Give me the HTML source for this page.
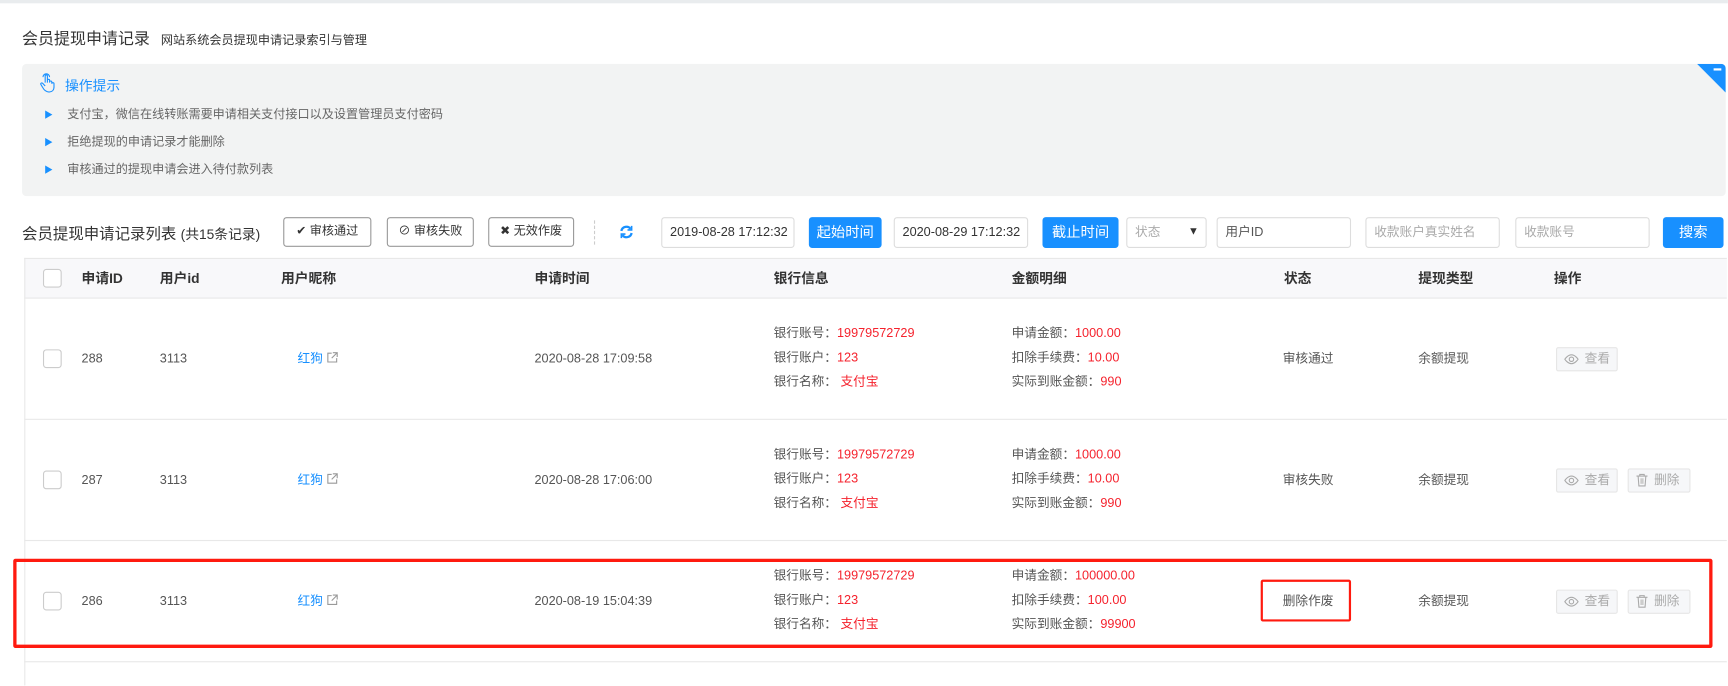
<!DOCTYPE html>
<html><head><meta charset="utf-8"><style>
*{margin:0;padding:0;box-sizing:border-box}
html,body{width:1728px;height:686px;overflow:hidden;background:#fff}
body{font-family:"Liberation Sans","Noto Sans CJK SC",sans-serif;font-size:12px;color:#555;position:relative}
#w{position:absolute;left:0;top:0;width:1568px;height:622px;overflow:hidden;transform:scale(1.102);transform-origin:0 0}
.a{position:absolute;white-space:nowrap}
.btn{position:absolute;top:197px;height:27px;border:1px solid #999;border-radius:3px;background:#fff;color:#333;font-size:11px;line-height:25px;text-align:center;white-space:nowrap}
.inp{position:absolute;top:197px;height:28px;border:1px solid #ddd;border-radius:3px;background:#fff;color:#333;font-size:11.5px;line-height:26px;padding-left:7px;white-space:nowrap;overflow:hidden}
.ph{color:#aaa}
.bb{position:absolute;top:197px;height:28px;background:#1890ff;border-radius:3px;color:#fff;font-size:13px;line-height:28px;text-align:center;white-space:nowrap}
.th{position:absolute;top:245px;font-weight:bold;color:#333;font-size:12.5px;line-height:16px}
.hl{position:absolute;left:22px;width:1545px;height:1px;background:#e8e8e8}
.cb{position:absolute;left:39px;width:17px;height:17px;border:1px solid #ccc;border-radius:3px;background:#fff}
.r{color:#f5222d}
.ln{line-height:22px;font-size:11.5px}
.t{line-height:16px;font-size:11.5px}
.op{position:absolute;height:22px;border:1px solid #e6e6e6;background:#f6f7f9;border-radius:2px;color:#aaa;font-size:11.5px;line-height:20px;padding-left:6px;white-space:nowrap}
.op svg{vertical-align:-3px;margin-right:5px}
</style></head><body><div id="w">
<div class="a" style="left:0;top:0;width:1568px;height:3px;background:#e9ecee"></div>
<div class="a" style="left:20px;top:24px;font-size:14.5px;color:#333">会员提现申请记录 <span style="font-size:11px;color:#333;margin-left:6px">网站系统会员提现申请记录索引与管理</span></div>
<div class="a" style="left:20px;top:58px;width:1546px;height:120px;background:#f2f3f3;border-radius:4px;overflow:hidden">
 <div class="a" style="right:0;top:0;width:0;height:0;border-top:26px solid #1890ff;border-left:26px solid transparent"></div>
 <div class="a" style="right:4px;top:4px;width:7px;height:2px;background:#fff"></div>
 <svg class="a" style="left:15px;top:8px" width="16" height="18" viewBox="0 0 16 18" fill="none" stroke="#1890ff" stroke-width="1"><path d="M6 9V3a1 1 0 0 1 2 0v6M8 8V7a1 1 0 0 1 2 0v2M10 8.5a1 1 0 0 1 2 0V10M12 10a1 1 0 0 1 2 0v3c0 3-2 4.5-4.5 4.5S5 16 3.5 13L2 10.5a1 1 0 0 1 1.8-.8L6 12"/><path d="M4 4a3 3 0 0 1 6 0" /></svg>
 <div class="a" style="left:39px;top:9px;font-size:12.5px;color:#1890ff">操作提示</div>
 <div class="a" style="left:20px;top:34px;color:#666;line-height:24px;font-size:11px">
  <div><span style="color:#1890ff;font-size:8px;margin-right:13px">▶</span>支付宝，微信在线转账需要申请相关支付接口以及设置管理员支付密码</div>
  <div><span style="color:#1890ff;font-size:8px;margin-right:13px">▶</span>拒绝提现的申请记录才能删除</div>
  <div><span style="color:#1890ff;font-size:8px;margin-right:13px">▶</span>审核通过的提现申请会进入待付款列表</div>
 </div>
</div>
<div class="a" style="left:20px;top:202px;font-size:14px;color:#333">会员提现申请记录列表 <span style="font-size:12.5px">(共15条记录)</span></div>
<div class="btn" style="left:257px;width:80px">✔ 审核通过</div>
<div class="btn" style="left:351px;width:79px">⊘ 审核失败</div>
<div class="btn" style="left:443px;width:78px">✖ 无效作废</div>
<div class="a" style="left:539px;top:200px;height:22px;border-left:1px dashed #ccc"></div>
<svg class="a" style="left:562px;top:204px" width="13" height="13" viewBox="0 0 14 14" fill="none" stroke="#1890ff" stroke-width="2.2"><path d="M2 6a5 5 0 0 1 9-2M12 8a5 5 0 0 1-9 2"/><path d="M12 1v4H8M2 13V9h4" stroke-width="1.6"/></svg>
<div class="inp" style="left:600px;width:121px">2019-08-28 17:12:32</div>
<div class="bb" style="left:734px;width:66px">起始时间</div>
<div class="inp" style="left:811px;width:122px">2020-08-29 17:12:32</div>
<div class="bb" style="left:946px;width:69px">截止时间</div>
<div class="inp ph" style="left:1022px;width:73px">状态<span style="position:absolute;right:6px;color:#333;font-size:10px">▼</span></div>
<div class="inp ph" style="left:1104px;width:122px;color:#555">用户ID</div>
<div class="inp ph" style="left:1239px;width:122px">收款账户真实姓名</div>
<div class="inp ph" style="left:1375px;width:122px">收款账号</div>
<div class="bb" style="left:1509px;width:55px">搜索</div>

<div class="a" style="left:22px;top:234px;width:1545px;height:36px;background:#f8f8fa;border-top:1px solid #e8e8e8"></div>
<div class="a" style="left:22px;top:234px;width:1px;height:388px;background:#e8e8e8"></div>
<div class="hl" style="top:270px"></div><div class="hl" style="top:380px"></div><div class="hl" style="top:490px"></div><div class="hl" style="top:600px"></div>
<div class="cb" style="top:244px"></div>
<div class="th" style="left:74px">申请ID</div><div class="th" style="left:145px">用户id</div><div class="th" style="left:255px">用户昵称</div><div class="th" style="left:485px">申请时间</div><div class="th" style="left:702px">银行信息</div><div class="th" style="left:918px">金额明细</div><div class="th" style="left:1165px">状态</div><div class="th" style="left:1287px">提现类型</div><div class="th" style="left:1410px">操作</div>

<!-- row 1 -->
<div class="cb" style="top:317px"></div>
<div class="a t" style="left:74px;top:318px">288</div><div class="a t" style="left:145px;top:318px">3113</div>
<div class="a t" style="left:270px;top:318px;color:#1890ff">红狗 <svg width="11" height="11" viewBox="0 0 11 11" fill="none" stroke="#999" style="vertical-align:-1px"><path d="M5 1.5H1.5v8h8V6M6 1h4v4M10 1 5 6"/></svg></div>
<div class="a t" style="left:485px;top:318px">2020-08-28 17:09:58</div>
<div class="a ln" style="left:702px;top:292px">银行账号：<span class="r">19979572729</span><br>银行账户：<span class="r">123</span><br>银行名称： <span class="r">支付宝</span></div>
<div class="a ln" style="left:918px;top:292px">申请金额：<span class="r">1000.00</span><br>扣除手续费：<span class="r">10.00</span><br>实际到账金额：<span class="r">990</span></div>
<div class="a t" style="left:1164px;top:318px">审核通过</div><div class="a t" style="left:1287px;top:318px">余额提现</div>
<div class="op" style="left:1412px;top:315px;width:56px"><svg width="14" height="12" viewBox="0 0 14 12" fill="none" stroke="#aaa"><path d="M1 6s2.5-4 6-4 6 4 6 4-2.5 4-6 4-6-4-6-4z"/><circle cx="7" cy="6" r="2"/></svg>查看</div>

<!-- row 2 -->
<div class="cb" style="top:427px"></div>
<div class="a t" style="left:74px;top:428px">287</div><div class="a t" style="left:145px;top:428px">3113</div>
<div class="a t" style="left:270px;top:428px;color:#1890ff">红狗 <svg width="11" height="11" viewBox="0 0 11 11" fill="none" stroke="#999" style="vertical-align:-1px"><path d="M5 1.5H1.5v8h8V6M6 1h4v4M10 1 5 6"/></svg></div>
<div class="a t" style="left:485px;top:428px">2020-08-28 17:06:00</div>
<div class="a ln" style="left:702px;top:402px">银行账号：<span class="r">19979572729</span><br>银行账户：<span class="r">123</span><br>银行名称： <span class="r">支付宝</span></div>
<div class="a ln" style="left:918px;top:402px">申请金额：<span class="r">1000.00</span><br>扣除手续费：<span class="r">10.00</span><br>实际到账金额：<span class="r">990</span></div>
<div class="a t" style="left:1164px;top:428px">审核失败</div><div class="a t" style="left:1287px;top:428px">余额提现</div>
<div class="op" style="left:1412px;top:425px;width:56px"><svg width="14" height="12" viewBox="0 0 14 12" fill="none" stroke="#aaa"><path d="M1 6s2.5-4 6-4 6 4 6 4-2.5 4-6 4-6-4-6-4z"/><circle cx="7" cy="6" r="2"/></svg>查看</div>
<div class="op" style="left:1477px;top:425px;width:57px"><svg width="12" height="13" viewBox="0 0 12 13" fill="none" stroke="#aaa"><path d="M1 3h10M4 3V1.5h4V3M2.5 3l.7 9h5.6l.7-9"/><rect x="4.5" y="5" width="3" height="5" fill="#ccc" stroke="none"/></svg>删除</div>

<!-- row 3 -->
<div class="cb" style="top:537px"></div>
<div class="a t" style="left:74px;top:538px">286</div><div class="a t" style="left:145px;top:538px">3113</div>
<div class="a t" style="left:270px;top:538px;color:#1890ff">红狗 <svg width="11" height="11" viewBox="0 0 11 11" fill="none" stroke="#999" style="vertical-align:-1px"><path d="M5 1.5H1.5v8h8V6M6 1h4v4M10 1 5 6"/></svg></div>
<div class="a t" style="left:485px;top:538px">2020-08-19 15:04:39</div>
<div class="a ln" style="left:702px;top:512px">银行账号：<span class="r">19979572729</span><br>银行账户：<span class="r">123</span><br>银行名称： <span class="r">支付宝</span></div>
<div class="a ln" style="left:918px;top:512px">申请金额：<span class="r">100000.00</span><br>扣除手续费：<span class="r">100.00</span><br>实际到账金额：<span class="r">99900</span></div>
<div class="a t" style="left:1164px;top:538px">删除作废</div><div class="a t" style="left:1287px;top:538px">余额提现</div>
<div class="op" style="left:1412px;top:535px;width:56px"><svg width="14" height="12" viewBox="0 0 14 12" fill="none" stroke="#aaa"><path d="M1 6s2.5-4 6-4 6 4 6 4-2.5 4-6 4-6-4-6-4z"/><circle cx="7" cy="6" r="2"/></svg>查看</div>
<div class="op" style="left:1477px;top:535px;width:57px"><svg width="12" height="13" viewBox="0 0 12 13" fill="none" stroke="#aaa"><path d="M1 3h10M4 3V1.5h4V3M2.5 3l.7 9h5.6l.7-9"/><rect x="4.5" y="5" width="3" height="5" fill="#ccc" stroke="none"/></svg>删除</div>

<div class="a" style="left:12px;top:507px;width:1542px;height:81px;border:3px solid #ff1a0f;border-radius:2px"></div>
<div class="a" style="left:1144px;top:526px;width:82px;height:38px;border:2px solid #ff1a0f;border-radius:2px"></div>
</div></body></html>
